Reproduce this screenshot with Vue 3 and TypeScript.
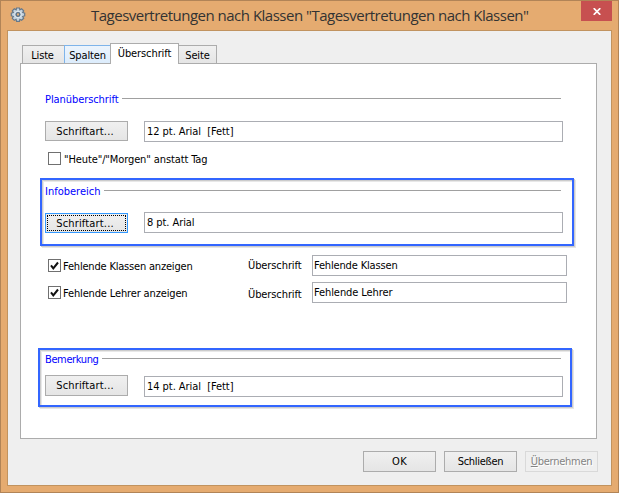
<script setup lang="ts">
import { reactive } from 'vue'

interface Tab { label: string; state: string; width: number }

const tabs: Tab[] = [
  { label: 'Liste', state: 'first', width: 22 },
  { label: 'Spalten', state: 'hot', width: 36 },
  { label: 'Überschrift', state: 'active', width: 53 },
  { label: 'Seite', state: 'last', width: 24 },
]

const missing = reactive([
  { label: 'Fehlende Klassen anzeigen', labelWidth: 129, checked: true, title: 'Fehlende Klassen', titleWidth: 83 },
  { label: 'Fehlende Lehrer anzeigen', labelWidth: 124, checked: true, title: 'Fehlende Lehrer', titleWidth: 78 },
])

// Spreads the letters of a label so that it takes the given width.
const vFit = {
  mounted(el: HTMLElement, binding: { value: number }) {
    const count = (el.textContent ?? '').length
    const natural = el.getBoundingClientRect().width
    el.style.letterSpacing = `${(binding.value + 0.5 - natural) / count}px`
  },
}
</script>

<template>
  <div class="window">
    <header class="titlebar">
      <svg class="gear" viewBox="0 0 16 16" width="16" height="16">
        <path d="M6.600 1h2.800l.5 1.800 1.700-1 2.100 2-1 1.700 2 .6v2.800l-2 .6 1 1.800-2.100 2-1.700-1-.5 2H6.600l-.5-2-1.800 1-2-2 1-1.800-2-.6V6.100l2-.6-1-1.700 2-2 1.800 1z" fill="#c3d2de" stroke="#65788a" stroke-width="1.200" />
        <circle cx="8" cy="7.500" r="3.300" fill="#a9bccb" stroke="#e2ebf2" stroke-width="1" />
        <circle cx="8" cy="7.500" r="1.800" fill="#dfae7c" stroke="#5b7286" stroke-width="1.300" />
      </svg>
      <h1 class="title"><span v-fit="437">Tagesvertretungen nach Klassen "Tagesvertretungen nach Klassen"</span></h1>
      <button class="close" aria-label="Schließen">
        <svg viewBox="0 0 8 7" width="8" height="7"><path d="M.7.2 7.300 6.800M7.300.2.7 6.800" stroke="#fff" stroke-width="1.700" /></svg>
      </button>
    </header>

    <main class="client">
      <nav class="tabs">
        <div v-for="tab in tabs" :key="tab.label" class="tab" :class="tab.state">
          <span v-fit="tab.width">{{ tab.label }}</span>
        </div>
      </nav>

      <section class="panel">
        <div class="heading plan"><span v-fit="73">Planüberschrift</span><i></i></div>
        <div class="row plan-row">
          <button class="btn font"><span v-fit="57">Schriftart...</span></button>
          <div class="field"><span v-fit="86">12 pt. Arial&nbsp; [Fett]</span></div>
        </div>
        <div class="check today">
          <span class="box"></span><span v-fit="143" class="check-label">"Heute"/"Morgen" anstatt Tag</span>
        </div>

        <div class="heading info"><span v-fit="55">Infobereich</span><i></i></div>
        <div class="row info-row">
          <button class="btn font focused"><span v-fit="57">Schriftart...</span></button>
          <div class="field"><span v-fit="47">8 pt. Arial</span></div>
        </div>

        <div class="missing">
          <div v-for="item in missing" :key="item.title" class="missing-row">
            <div class="check" @click="item.checked = !item.checked">
              <span class="box">
                <svg v-if="item.checked" viewBox="0 0 11 11" width="11" height="11"><path d="M2 5.300 4.300 8.300 9 2.500" fill="none" stroke="#111" stroke-width="2" /></svg>
              </span>
              <span v-fit="item.labelWidth" class="check-label">{{ item.label }}</span>
            </div>
            <div class="caption"><span v-fit="53">Überschrift</span></div>
            <div class="field"><span v-fit="item.titleWidth">{{ item.title }}</span></div>
          </div>
        </div>

        <div class="heading note"><span v-fit="53">Bemerkung</span><i></i></div>
        <div class="row note-row">
          <button class="btn font"><span v-fit="57">Schriftart...</span></button>
          <div class="field"><span v-fit="86">14 pt. Arial&nbsp; [Fett]</span></div>
        </div>

        <div class="marker marker-info"></div>
        <div class="marker marker-note"></div>
      </section>

      <footer class="actions">
        <button class="btn"><span v-fit="14.5">OK</span></button>
        <button class="btn"><span v-fit="45">Schließen</span></button>
        <button class="btn disabled" disabled><span v-fit="61"><u>Ü</u>bernehmen</span></button>
      </footer>
    </main>
  </div>
</template>

<style>
body {
  margin: 0;
  overflow: hidden;
}
</style>

<style scoped>
* {
  box-sizing: border-box;
}
span {
  white-space: nowrap;
}
.window {
  display: flex;
  flex-direction: column;
  width: 619px;
  height: 493px;
  padding: 0 6px 6px;
  border: 1px solid #b18457;
  background: #e5ab70;
  color: #000;
  font: 11px/15px "DejaVu Sans Condensed", "DejaVu Sans", sans-serif;
  font-stretch: condensed;
}
.titlebar {
  display: flex;
  flex: 0 0 29px;
  align-items: flex-start;
}
.gear {
  margin: 6px 0 0 3px;
}
.title {
  width: 438px;
  margin: 3px 0 0 65px;
  color: #333;
  font: 400 15px/22px "Open Sans", "Noto Sans", sans-serif;
}
.close {
  display: flex;
  align-items: center;
  justify-content: center;
  width: 31px;
  height: 20px;
  margin-left: auto;
  padding: 1px 0 0 1px;
  border: 0;
  background: #c75050;
}
.client {
  flex: 1;
  padding: 12px 14px 0 12px;
  border: 1px solid #c1935f;
  background: #efefef;
}
.tabs {
  display: flex;
  align-items: flex-end;
  height: 21px;
  padding-left: 2px;
}
.tab {
  display: flex;
  justify-content: center;
  width: 43px;
  height: 19px;
  padding-top: 2px;
  border: 1px solid #acacac;
  background: linear-gradient(#f0f0f0, #e5e5e5);
}
.tab.first {
  width: 42px;
  padding-right: 2px;
  border-right: 0;
}
.tab.hot {
  width: 47px;
  border-color: #7eb4ea;
  background: linear-gradient(#ecf4fc, #dcecfc);
}
.tab.active {
  z-index: 1;
  width: 69px;
  height: 21px;
  margin-left: -1px;
  border-bottom: 0;
  background: #fff;
}
.tab.last {
  width: 39px;
  margin-left: -1px;
}
.panel {
  position: relative;
  width: 577px;
  height: 376px;
  margin-top: -1px;
  padding: 27px 29px 0 24px;
  border: 1px solid #acacac;
  background: #fff;
}
.heading {
  display: flex;
  align-items: center;
  gap: 3px;
  width: 516px;
  height: 15px;
  color: #00f;
}
.heading span {
  padding-top: 2px;
}
.heading i {
  flex: 1;
  height: 1px;
  background: #a0a0a0;
}
.row {
  display: flex;
  gap: 16px;
  width: 518px;
  height: 21px;
}
.plan-row {
  margin-top: 15px;
}
.today {
  margin: 10px 0 0 3px;
}
.info {
  margin-top: 18px;
}
.info-row {
  margin-top: 14px;
}
.missing {
  display: flex;
  flex-direction: column;
  gap: 6px;
  margin: 22px 0 0 3px;
}
.missing-row {
  display: grid;
  grid-template-columns: 200px 64px 255px;
  align-items: center;
  height: 21px;
}
.missing-row .caption {
  padding-bottom: 0;
}
.missing-row:last-child .caption {
  padding: 4px 0 0;
}
.note {
  margin-top: 48px;
}
.note-row {
  margin-top: 10px;
}
.field {
  flex: 1;
  height: 21px;
  padding: 2px 0 0 2px;
  border: 1px solid #abadb3;
  background: #fff;
}
.missing-row .field {
  padding-left: 1px;
}
.btn {
  display: flex;
  align-items: center;
  justify-content: center;
  width: 73px;
  height: 21px;
  padding: 0;
  border: 1px solid #acacac;
  background: linear-gradient(#f0f0f0, #e5e5e5);
  color: #000;
  font: inherit;
}
.btn.font {
  width: 83px;
  height: 20px;
  padding-right: 3px;
}
.info-row .btn.font {
  margin-top: 1px;
}
.note-row .btn.font {
  height: 21px;
  margin-top: -1px;
}
.btn.focused {
  border-color: #3399ff;
  outline: 1px dotted #000;
  outline-offset: -3px;
}
.btn.disabled {
  border-color: #d9d9d9;
  background: #efefef;
  color: #838383;
  text-shadow: 1px 1px #fff;
}
.check {
  display: flex;
  align-items: center;
  gap: 3px;
  height: 13px;
}
.check-label {
  padding-top: 2px;
}
.missing .check {
  gap: 2px;
}
.box {
  width: 13px;
  height: 13px;
  border: 1px solid #707070;
  background: #fff;
}
.box svg {
  display: block;
}
.marker {
  position: absolute;
  width: 534px;
  border: 2px solid #3366ff;
  box-shadow: 1px 1px #ccc, 2px 2px #e6e6e6, inset 1px 1px #ccc, inset 2px 2px #e8e8e8;
  pointer-events: none;
}
.marker-info {
  left: 19px;
  top: 114px;
  height: 68px;
}
.marker-note {
  left: 17px;
  top: 284px;
  height: 59px;
}
.actions {
  display: flex;
  justify-content: flex-end;
  gap: 8px;
  margin: 12px -1px 0 0;
}
</style>
